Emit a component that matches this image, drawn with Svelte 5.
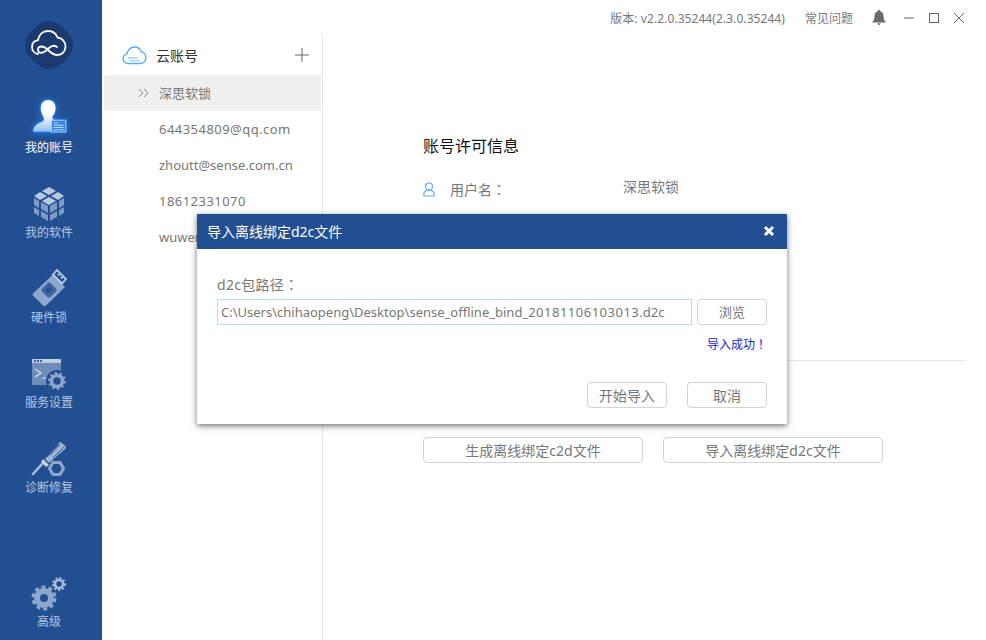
<script>
  const accounts = [
    { name: '深思软锁', active: true },
    { name: '644354809@qq.com', num: true },
    { name: 'zhoutt@sense.com.cn' },
    { name: '18612331070', num: true },
    { name: 'wuwenwen@sense.com.cn' }
  ];
</script>

<div class="app">
  <nav class="side">
    <div class="logo">
      <svg width="50" height="50" viewBox="0 0 50 50">
        <path d="M25 1C32 1 36 5 41 9.500C46 14 49 19 49 25C49 31 46 36 41 40.500C36 45 32 49 25 49C18 49 14 45 9 40.500C4 36 1 31 1 25C1 19 4 14 9 9.500C14 5 18 1 25 1Z" fill="#1a3a70"/>
        <path d="M14 34C10.500 33.500 8 30.500 8 27C8 23.500 10.500 20.800 14 20.200C15 14.500 19 11 24 11C28.500 11 32 13.500 33.500 17.500C38 18 41.500 21.500 41.500 26.500C41.500 31.500 38 35 33.500 35C29 35 26 32 24 30C22 28 20 26.500 17.500 26.500C15.500 26.500 14 27.800 14 29.700C14 31.500 15.500 32.800 17.500 32.800C20.500 32.800 23 29.500 26 27.200C28 25.700 31 25.500 33 27" fill="none" stroke="#fff" stroke-width="1.800" stroke-linecap="round"/>
      </svg>
    </div>

    <button class="nav on">
      <svg class="ic glow" width="54" height="44" viewBox="0 0 54 44">
        <defs><linearGradient id="u" x1="0" y1="0" x2="0" y2="1"><stop offset="0" stop-color="#fff"/><stop offset=".45" stop-color="#fff"/><stop offset="1" stop-color="#8fbdf5"/></linearGradient></defs>
        <path d="M25 3c5.500 0 8.500 4 8.500 9.500 0 4-2 7-3.500 9l.5 3 4.500 2v12H10c-1.500 0-2-1-1.700-2.500C9 32 13 29 17 27.500l3-2-.5-3.500C18 19.500 16.500 16.500 16.500 12.500 16.500 7 19.500 3 25 3z" fill="url(#u)" stroke="#1f7ef0" stroke-width=".8"/>
        <rect x="28.500" y="25.500" width="16" height="13" fill="#2f86ee" stroke="#bcd8fb" stroke-width="1"/>
        <path d="M31 28.500h5M31 31h11M31 33.500h11M31 36h11" stroke="#cfe3fc" stroke-width="1"/>
      </svg>
      <span>我的账号</span>
    </button>

    <button class="nav">
      <svg class="ic" width="32" height="36" viewBox="0 0 32 36">
        <path d="M16 1l7 4-7 4-7-4zM7 6l7 4-7 4-6-4zM25 6l6 4-6 4-7-4zM16 11l7 4-7 4-7-4z" fill="#b9c9e0"/>
        <path d="M1 12l5 3v7l-5-3zM8 16l7 4v7l-7-4zM24 16l-7 4v7l7-4zM31 12l-5 3v7l5-3zM1 21l5 3v6l-5-3zM8 25l7 4v6l-7-4zM24 25l-7 4v6l7-4zM31 21l-5 3v6l5-3z" fill="#7f9bc4"/>
      </svg>
      <span>我的软件</span>
    </button>

    <button class="nav">
      <svg class="ic" width="36" height="38" viewBox="0 0 36 38">
        <path d="M2 24.500L22 5.500 34 18 15 36.500c-1 1-2 1-3 0L2 26.500c-.7-.7-.7-1.300 0-2z" fill="#8ea7cc"/>
        <path d="M22 5.500L26 1l9 9-4 4.500z" fill="none" stroke="#b9c9e0" stroke-width="1.800"/>
        <path d="M27 5l1.500 1.500M30 8l1.500 1.500" stroke="#dde6f2" stroke-width="1.600"/>
        <rect x="12" y="15" width="12" height="12" rx="2" transform="rotate(45 18 21)" fill="#3f659f"/>
        <circle cx="18" cy="21" r="3" fill="#28528f"/>
      </svg>
      <span>硬件锁</span>
    </button>

    <button class="nav">
      <svg class="ic" width="36" height="34" viewBox="0 0 36 34">
        <defs><linearGradient id="w" x1="0" y1="0" x2="0" y2="1"><stop offset="0" stop-color="#c5d2e5"/><stop offset="1" stop-color="#7390bb"/></linearGradient></defs>
        <rect x="1" y="1" width="29" height="26" rx="1" fill="url(#w)"/>
        <rect x="1" y="5" width="29" height="22" fill="#6f8dba"/>
        <path d="M3 3h2M6 3h2M9 3h2" stroke="#3c639c" stroke-width="1.800"/>
        <path d="M4 11l6 4-6 4M11 20h5" fill="none" stroke="#dbe4f1" stroke-width="1.200"/>
        <circle cx="26" cy="23" r="11" fill="#224f92"/>
        <circle cx="26" cy="23" r="5.500" fill="none" stroke="#8ea7cc" stroke-width="3.500"/>
        <circle cx="26" cy="23" r="8" fill="none" stroke="#8ea7cc" stroke-width="1.800" stroke-dasharray="2.500 2.500"/>
      </svg>
      <span>服务设置</span>
    </button>

    <button class="nav">
      <svg class="ic" width="36" height="36" viewBox="0 0 36 36">
        <path d="M14 18L28 2c1-1 2-1 3 0l3 3c1 1 1 2 0 3L18 22z" fill="#9fb3d3"/>
        <path d="M19 14l10-11M22 17L33 6M16 16L27 4" stroke="#2b5695" stroke-width="1"/>
        <path d="M12 18l6 6-3 2-5-5z" fill="#c5d2e5"/>
        <path d="M11 23L2 33" stroke="#aebfd9" stroke-width="2.500" stroke-linecap="round"/>
        <path d="M22 21.500h7l3.500 6-3.500 6h-7l-3.500-6z" fill="none" stroke="#8ea7cc" stroke-width="3"/>
      </svg>
      <span>诊断修复</span>
    </button>

    <button class="nav last">
      <svg class="ic" width="36" height="34" viewBox="0 0 36 34">
        <circle cx="13" cy="21" r="7" fill="none" stroke="#8ea7cc" stroke-width="6"/>
        <circle cx="13" cy="21" r="11" fill="none" stroke="#8ea7cc" stroke-width="3" stroke-dasharray="4 3"/>
        <circle cx="28" cy="7" r="4" fill="none" stroke="#aebfd9" stroke-width="2.500"/>
        <circle cx="28" cy="7" r="6" fill="none" stroke="#aebfd9" stroke-width="2" stroke-dasharray="2 2"/>
      </svg>
      <span>高级</span>
    </button>
  </nav>

  <div class="content">
    <header class="top">
      <span class="ver">版本: v2.2.0.35244(2.3.0.35244)</span>
      <span class="faq">常见问题</span>
      <svg class="bell" width="14" height="15" viewBox="0 0 14 15"><path d="M7 0c.8 0 1.200.5 1.300 1.200C10.500 1.800 11.500 3.500 11.500 6c0 3 .8 4.500 2 5.500v1H.5v-1c1.200-1 2-2.500 2-5.500 0-2.500 1-4.200 3.200-4.800C5.800.5 6.200 0 7 0zM5.500 13.300h3C8.500 14.300 7.800 15 7 15s-1.500-.7-1.500-1.700z" fill="#6b6b6b"/></svg>
      <svg class="win" width="12" height="12" viewBox="0 0 12 12"><path d="M1 6h10" stroke="#666"/></svg>
      <svg class="win" width="12" height="12" viewBox="0 0 12 12"><rect x="1.500" y="1.500" width="9" height="9" fill="none" stroke="#666"/></svg>
      <svg class="win" width="12" height="12" viewBox="0 0 12 12"><path d="M1 1l10 10M11 1L1 11" stroke="#666"/></svg>
    </header>

    <div class="body">
      <aside class="accounts">
        <div class="cloud-head">
          <svg width="25" height="19" viewBox="0 0 26 20">
            <path d="M6 18.500C3 18.500 1 16 1 13.500 1 11 2.500 9 5 8.500 5.500 4 9 1 13 1c3.500 0 6 2 7 5 3 .3 5 3 5 6.200 0 3.500-2.500 6.300-6 6.300z" fill="none" stroke="#5ea9f4" stroke-width="1.500"/>
            <path d="M6 12.500h10M8 15.500h11" stroke="#8cc2f7" stroke-width="1.200"/>
          </svg>
          <span class="ct">云账号</span>
          <svg class="plus" width="14" height="14" viewBox="0 0 14 14"><path d="M7 0v14M0 7h14" stroke="#666"/></svg>
        </div>
        <ul>
          {#each accounts as a}
            <li class:active={a.active} class:num={a.num}>
              {#if a.active}
                <svg class="chev" width="11" height="10" viewBox="0 0 11 10"><path d="M1 1l4 4-4 4M6 1l4 4-4 4" fill="none" stroke="#888"/></svg>
              {/if}
              {a.name}
            </li>
          {/each}
        </ul>
      </aside>

      <main class="main">
        <h2>账号许可信息</h2>
        <div class="row">
          <svg width="12" height="15" viewBox="0 0 12 15"><circle cx="6" cy="4.500" r="3.500" fill="none" stroke="#66a9f2" stroke-width="1.200"/><path d="M1 14c-.6-3 .8-5 3-5.500h4c2.200.5 3.600 2.500 3 5.500z" fill="none" stroke="#66a9f2" stroke-width="1.200"/></svg>
          <span class="lb">用户名<span class="fw">：</span></span>
          <span class="val">深思软锁</span>
        </div>
        <div class="rule"></div>
        <div class="actions">
          <button class="btn wide">生成离线绑定c2d文件</button>
          <button class="btn wide">导入离线绑定d2c文件</button>
        </div>
      </main>
    </div>
  </div>

  <section class="modal">
    <div class="m-head">
      <span>导入离线绑定d2c文件</span>
      <svg width="12" height="12" viewBox="0 0 12 12"><path d="M2 2l8 8M10 2l-8 8" stroke="#fff" stroke-width="3"/></svg>
    </div>
    <div class="m-body">
      <div class="m-label">d2c包路径<span class="fw">：</span></div>
      <div class="m-input">
        <div class="input">C:\Users\chihaopeng\Desktop\sense_offline_bind_<span class="digits">20181106103013</span>.d2c</div>
        <button class="btn browse">浏览</button>
      </div>
      <div class="ok">导入成功<span class="fw">！</span></div>
      <div class="m-foot">
        <button class="btn small">开始导入</button>
        <button class="btn small">取消</button>
      </div>
    </div>
  </section>
</div>

<style>
  :global(body) { margin: 0; background: #fff; }
  * { box-sizing: border-box; }
  .app {
    position: relative;
    display: flex;
    width: 986px;
    height: 640px;
    overflow: hidden;
    font-family: "Noto Sans", "Noto Sans CJK SC", sans-serif;
    font-size: 13px;
    color: #777;
  }
  button { font: inherit; color: inherit; background: none; border: 0; padding: 0; }
  .fw { font-family: "Noto Sans CJK TC", sans-serif; line-height: 1; }

  .side {
    width: 102px;
    flex: none;
    background: #224f92;
    display: flex;
    flex-direction: column;
    align-items: center;
    padding-top: 20px;
  }
  .logo { width: 50px; height: 50px; margin-bottom: 27px; margin-left: -4px; }
  .logo svg { display: block; }
  .nav {
    height: 85px;
    width: 100%;
    display: flex;
    flex-direction: column;
    align-items: center;
    justify-content: flex-end;
    color: #b5c7e2;
    font-size: 12px;
    line-height: 18px;
    flex: none;
  }
  .nav.on { height: 60px; color: #fff; }
  .nav span { margin-left: -4px; margin-top: 2px; }
  .ic { display: block; margin-left: -4px; }
  .glow { margin-left: -2px; filter: drop-shadow(0 0 3px #1f7ef0); }
  .last { margin-top: auto; padding-bottom: 9px; }

  .content { flex: 1; display: flex; flex-direction: column; min-width: 0; }
  .top {
    height: 35px;
    flex: none;
    display: flex;
    align-items: center;
    padding-right: 21px;
    font-size: 12px;
    color: #777;
  }
  .ver { margin-left: auto; letter-spacing: .07px; }
  .faq { margin-left: 20px; }
  .bell { margin-left: 19px; }
  .win { margin-left: 13px; }
  .bell + .win { margin-left: 17px; }
  .body { flex: 1; display: flex; min-height: 0; }

  .accounts {
    width: 221px;
    flex: none;
    border-right: 1px solid #e6e6e6;
    padding-left: 2px;
  }
  .cloud-head {
    height: 40px;
    display: flex;
    align-items: center;
    padding-left: 18px;
    padding-right: 13px;
    color: #333;
  }
  .ct { margin-left: 9px; font-size: 14px; }
  .plus { margin-left: auto; }
  ul { list-style: none; margin: 0; padding: 0; }
  li {
    position: relative;
    height: 36px;
    line-height: 36px;
    padding-left: 55px;
    font-size: 13px;
    white-space: nowrap;
    width: 217px;
    color: #777;
  }
  li.active { background: #f0f0f0; }
  li.num { letter-spacing: .46px; }
  .chev { position: absolute; left: 34px; top: 13px; }

  .main { flex: 1; padding: 100px 20px 0 100px; }
  h2 { margin: 0; font-size: 16px; font-weight: 400; line-height: 22px; color: #111; }
  .row { display: flex; align-items: center; margin-top: 20px; height: 24px; font-size: 14px; }
  .lb { margin-left: 15px; width: 173px; }
  .val { margin-top: -6px; }
  .rule { height: 1px; background: #e6e6e6; margin-top: 159px; }
  .actions { display: flex; gap: 20px; margin-top: 76px; }

  .btn {
    display: block;
    height: 26px;
    border: 1px solid #d4d4d4;
    border-radius: 4px;
    background: #fff;
    line-height: 24px;
    text-align: center;
    font-size: 14px;
    color: #777;
  }
  .wide { width: 220px; padding-top: 1px; }
  .small { width: 80px; padding-top: 1px; }
  .browse { width: 70px; font-size: 13px; }

  .modal {
    position: absolute;
    left: 197px;
    top: 214px;
    width: 590px;
    height: 210px;
    background: #fff;
    box-shadow: 0 2px 6px rgba(0, 0, 0, .55);
  }
  .m-head {
    height: 35px;
    background: #224f92;
    color: #fff;
    display: flex;
    align-items: center;
    justify-content: space-between;
    padding: 0 12px 1px 10px;
    font-size: 14px;
  }
  .m-body { padding: 27px 20px 0; }
  .m-label { height: 18px; line-height: 18px; font-size: 14px; letter-spacing: .3px; color: #777; }
  .m-input { display: flex; gap: 5px; margin-top: 5px; }
  .input {
    width: 475px;
    height: 26px;
    border: 1px solid #b5ddf5;
    padding-left: 3px;
    line-height: 24px;
    font-size: 13px;
    white-space: nowrap;
    overflow: hidden;
    color: #777;
  }
  .digits { letter-spacing: .5px; }
  .ok { margin-top: 11px; text-align: right; font-size: 12px; line-height: 18px; height: 18px; color: #1a1ae6; }
  .m-foot { display: flex; justify-content: flex-end; gap: 20px; margin-top: 28px; }
</style>
